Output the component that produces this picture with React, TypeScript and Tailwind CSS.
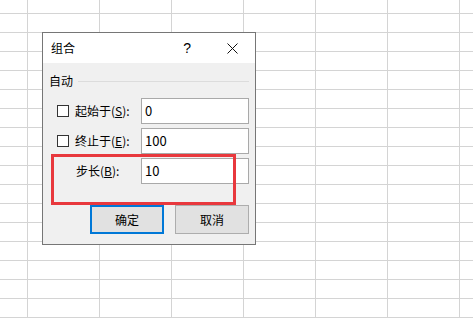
const font = { fontFamily: '"Noto Sans CJK SC", "Liberation Sans", sans-serif' };

const SheetGrid = () => {
  const rows = Array.from({ length: 17 });
  const cols = Array.from({ length: 6 });
  return (
    <div className="flex flex-col">
      {rows.map((_, r) => (
        <div
          key={r}
          className={`flex border-b border-[#d4d4d4] ${r === 0 ? "h-[14px]" : "h-[19px]"}`}
        >
          <div className="w-[28px] shrink-0 border-r border-[#d4d4d4]" />
          {cols.map((_, c) => (
            <div key={c} className="w-[72px] shrink-0 border-r border-[#d4d4d4]" />
          ))}
        </div>
      ))}
    </div>
  );
};

const Field = ({
  check,
  label,
  hot,
  rest,
  value,
}: {
  check: boolean;
  label: string;
  hot: string;
  rest: string;
  value: string;
}) => (
  <div className="flex h-[26px] items-center">
    <div className="flex w-[92px] items-center">
      {check ? (
        <span className="ml-[8px] mr-[6px] h-[12px] w-[12px] shrink-0 border border-[#333] bg-white" />
      ) : (
        <span className="w-[27px] shrink-0" />
      )}
      <span className="text-[12px] text-black">
        {label}(<span className="underline">{hot}</span>){rest}
      </span>
    </div>
    <div className="flex h-[26px] w-[108px] items-center border border-[#a9a9a9] bg-white pl-[3px] text-[13px] text-black">
      {value}
    </div>
  </div>
);

export default function App() {
  return (
    <div className="relative h-[325px] w-[473px] overflow-hidden bg-white" style={font}>
      <SheetGrid />

      <div className="absolute left-[42px] top-[32px] flex h-[213px] w-[214px] flex-col border border-[#767676] bg-[#f0f0f0]">
        <div className="flex h-[30px] items-center bg-white pl-[8px] text-[12px] text-black">
          <span>组合</span>
          <span className="ml-auto mr-[36px] text-[14px] leading-none" style={{ fontFamily: '"Liberation Sans", sans-serif' }}>
            ?
          </span>
          <svg width="11" height="11" viewBox="0 0 11 11" className="mr-[17px]">
            <path d="M0.5 0.5 L10.5 10.5 M10.5 0.5 L0.5 10.5" stroke="#111" strokeWidth="1" />
          </svg>
        </div>

        <div className="flex flex-1 flex-col px-[6px] pb-[10px] pt-[10px]">
          <div className="flex h-[16px] items-center text-[12px] text-black">
            <span>自动</span>
            <div className="ml-[5px] h-px flex-1 bg-[#dcdcdc]" />
          </div>

          <div className="mt-[9px] flex flex-col gap-[4px]">
            <Field check label="起始于" hot="S" rest=":" value="0" />
            <Field check label="终止于" hot="E" rest=":" value="100" />
            <Field check={false} label="步长" hot="B" rest=":" value="10" />
          </div>

          <div className="mt-auto flex justify-end gap-[11px]">
            <button className="h-[29px] w-[74px] border-2 border-[#0078d7] bg-[#e1e1e1] text-[12px] text-black">
              确定
            </button>
            <button className="h-[29px] w-[74px] border border-[#adadad] bg-[#e1e1e1] text-[12px] text-black">
              取消
            </button>
          </div>
        </div>
      </div>

      <div className="absolute left-[51px] top-[154px] h-[51px] w-[185px] border-[3px] border-[#e8383d]" />
    </div>
  );
}
